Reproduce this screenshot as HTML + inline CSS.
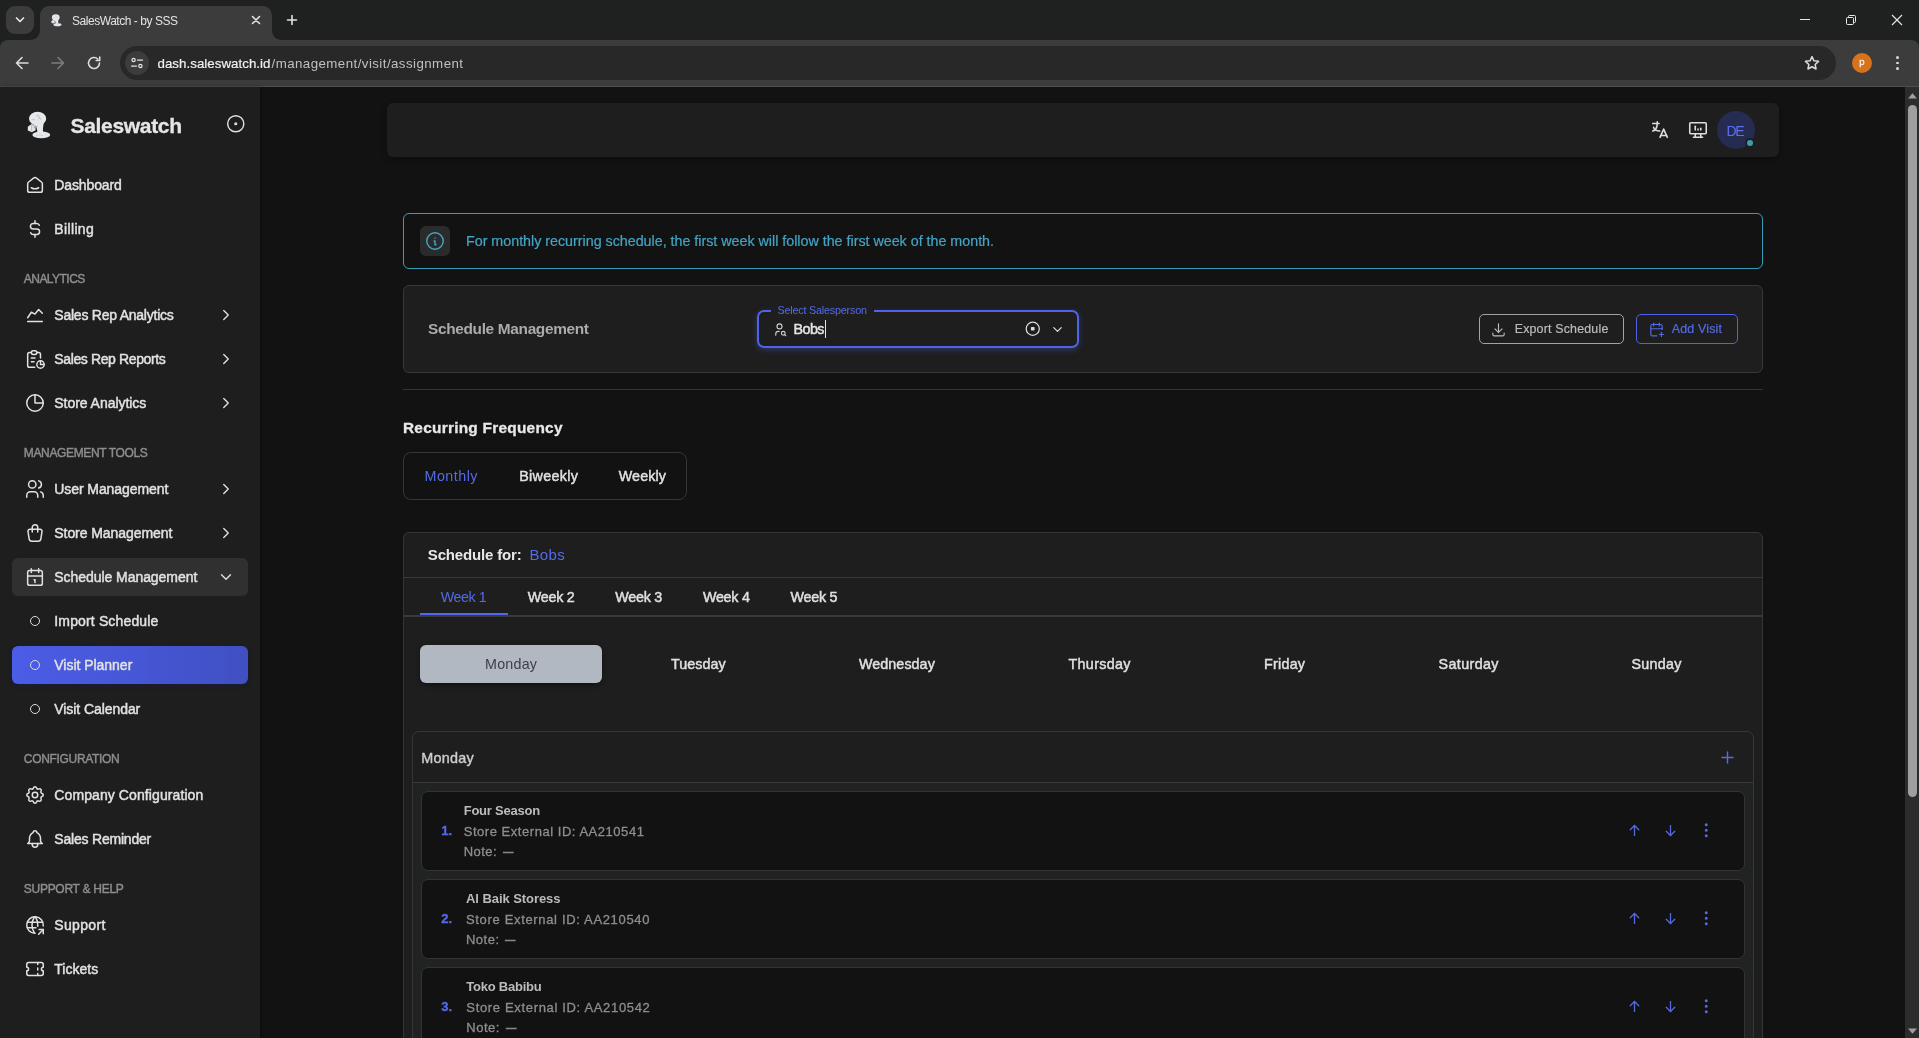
<!DOCTYPE html>
<html lang="en"><head><meta charset="utf-8"><title>SalesWatch - by SSS</title>
<style>
html,body{margin:0;padding:0;background:#121212}
body{width:1919px;height:1038px;overflow:hidden;position:relative;font-family:"Liberation Sans", sans-serif}
.b,.t,.ic{position:absolute;display:block}
.t{white-space:pre;line-height:1;font-kerning:normal}
.ic{overflow:visible}
#root{position:absolute;left:0;top:0;width:1919px;height:1038px;will-change:transform}
</style></head>
<body>
<div id="root">
<div class="b" style="left:0px;top:0px;width:1919px;height:50px;background:#1f2020"></div>
<div class="b" style="left:6px;top:6px;width:28px;height:28px;background:#3c3c3c;border-radius:9px"></div>
<svg class="ic" style="left:14px;top:15px" width="12" height="10" viewBox="0 0 12 10" fill="none" stroke="#e3e3e3" stroke-width="1.7" stroke-linecap="round" stroke-linejoin="round"><path d="M2.500 3l3.500 3.500l3.500-3.500"/></svg>
<svg class="ic" style="left:30px;top:6px" width="254" height="34" viewBox="0 0 254 34"><path fill="#3c3c3c" d="M0 34 C6 34 10 30 10 24 V10 C10 4 14 0 20 0 H232 C238 0 242 4 242 10 V24 C242 30 246 34 252 34 Z"/></svg>
<svg class="ic" style="left:50.600px;top:13.700px" width="10.800" height="12.600" viewBox="0 0 24 28"><ellipse cx="10.600" cy="7.700" rx="8.600" ry="6.900" fill="#e7e8ea"/><path fill="#e7e8ea" d="M7 12.500 L16.800 11.500 C16.200 15.500 15.500 19 16.300 21.800 L10.200 21.800 C10.600 19.500 9.600 16 7 12.500 Z"/><ellipse cx="14.300" cy="23.900" rx="8.900" ry="3.300" fill="#e7e8ea"/><path fill="#e4e6ea" d="M0.800 15.800 L4.600 13 L8.600 14.600 L8.600 19.200 L4.800 21.300 L0.800 19.600 Z"/><path fill="none" stroke="#9fafd0" stroke-width=".7" d="M4.600 13.500 L4.600 20.500 M4.300 8.700 h3.600 M8.800 5.500 q1.500-2.200 3.300-.4 q.9 1.300 -1.200 3.200 M12.800 6 l.6 2.800"/><path fill="none" stroke="#8a8f99" stroke-width=".8" d="M6 14.300 L8.200 17.500 L10.200 14.800"/><path fill="none" stroke="#b9c4dd" stroke-width=".6" d="M9 24.600 q3-1.400 7 0 M18 23.300 l1.500 .9"/></svg>
<span class="t" style="left:72.00px;top:14.84px;font-size:12px;color:#e3e3e3;letter-spacing:-0.459px;">SalesWatch - by SSS</span>
<svg class="ic" style="left:250px;top:14px" width="12" height="12" viewBox="0 0 12 12" stroke="#e3e3e3" stroke-width="1.600" stroke-linecap="round"><path d="M2.500 2.500l7 7M9.500 2.500l-7 7"/></svg>
<svg class="ic" style="left:285px;top:13px" width="14" height="14" viewBox="0 0 14 14" stroke="#e3e3e3" stroke-width="1.600" stroke-linecap="round"><path d="M7 2.500v9M2.500 7h9"/></svg>
<svg class="ic" style="left:1799px;top:14px" width="12" height="12" viewBox="0 0 12 12" stroke="#e8e8e8" stroke-width="1"><path d="M1 5.500h10"/></svg>
<svg class="ic" style="left:1845px;top:14px" width="12" height="12" viewBox="0 0 12 12" fill="none" stroke="#e8e8e8" stroke-width="1"><rect x="1.500" y="3.500" width="7" height="7" rx="1"/><path d="M3.500 3.500v-1a1 1 0 0 1 1-1h5a1 1 0 0 1 1 1v5a1 1 0 0 1-1 1h-1"/></svg>
<svg class="ic" style="left:1891px;top:14px" width="12" height="12" viewBox="0 0 12 12" stroke="#e8e8e8" stroke-width="1.100"><path d="M1 1l10 10M11 1l-10 10"/></svg>
<div class="b" style="left:0px;top:40px;width:1919px;height:46px;background:#3c3c3c;border-radius:8px 8px 0 0"></div>
<div class="b" style="left:0px;top:86px;width:1919px;height:1px;background:#4b4f50"></div>
<svg class="ic" style="left:14px;top:55px" width="16" height="16" viewBox="0 0 16 16" fill="none" stroke="#dcdcdc" stroke-width="1.600" stroke-linecap="round" stroke-linejoin="round"><path d="M14 8h-11.500M8 2.500l-5.500 5.500l5.500 5.500"/></svg>
<svg class="ic" style="left:50px;top:55px" width="16" height="16" viewBox="0 0 16 16" fill="none" stroke="#7d7d7d" stroke-width="1.600" stroke-linecap="round" stroke-linejoin="round"><path d="M2 8h11.500M8 2.500l5.500 5.500l-5.500 5.500"/></svg>
<svg class="ic" style="left:86px;top:55px" width="16" height="16" viewBox="0 0 16 16" fill="none" stroke="#dcdcdc" stroke-width="1.600" stroke-linecap="round" stroke-linejoin="round"><path d="M13.500 8a5.500 5.500 0 1 1-1.700-4"/><path d="M13.700 2v3.500h-3.500" /></svg>
<div class="b" style="left:120px;top:46px;width:1716px;height:34px;background:#282828;border-radius:17px"></div>
<div class="b" style="left:125px;top:51px;width:24px;height:24px;background:#3c3c3c;border-radius:12px"></div>
<svg class="ic" style="left:130px;top:56px" width="14" height="14" viewBox="0 0 14 14" fill="none" stroke="#e3e3e3" stroke-width="1.250" stroke-linecap="round"><circle cx="3.600" cy="4" r="1.600"/><path d="M7.500 4h5"/><circle cx="10.400" cy="10" r="1.600"/><path d="M1.500 10h5"/></svg>
<span class="t" style="left:157.50px;top:56.64px;font-size:13.3px;color:#f0f0f0;letter-spacing:0.038px;-webkit-text-stroke:0.2px #f0f0f0;">dash.saleswatch.id</span>
<span class="t" style="left:271.50px;top:56.64px;font-size:13.3px;color:#c0c0c0;letter-spacing:0.441px;">/management/visit/assignment</span>
<svg class="ic" style="left:1803px;top:54px" width="18" height="18" viewBox="0 0 24 24" fill="none" stroke="#dcdcdc" stroke-width="2" stroke-linejoin="round"><path d="M12 3.500l2.600 5.600l6.100.7l-4.500 4.200l1.200 6l-5.400-3l-5.400 3l1.200-6l-4.500-4.200l6.100-.7z"/></svg>
<div class="b" style="left:1852px;top:53px;width:20px;height:20px;background:#d8731b;border-radius:10px"></div>
<span class="t" style="left:1859.20px;top:56.66px;font-size:9.5px;color:#eef0f2;-webkit-text-stroke:0.3px #eef0f2;">p</span>
<div class="b" style="left:1896.2px;top:56.2px;width:2.6px;height:2.6px;background:#dcdcdc;border-radius:2px"></div>
<div class="b" style="left:1896.2px;top:61.7px;width:2.6px;height:2.6px;background:#dcdcdc;border-radius:2px"></div>
<div class="b" style="left:1896.2px;top:67.2px;width:2.6px;height:2.6px;background:#dcdcdc;border-radius:2px"></div>
<div class="b" style="left:0px;top:87px;width:1919px;height:951px;background:#121212"></div>
<div class="b" style="left:1905px;top:87px;width:14px;height:951px;background:#2c2c2c"></div>
<svg class="ic" style="left:1908px;top:92.500px" width="9" height="6" viewBox="0 0 9 6"><path fill="#a0a0a0" d="M4.500 0.300l4.500 5.200h-9z"/></svg>
<svg class="ic" style="left:1908px;top:1027.500px" width="9" height="6" viewBox="0 0 9 6"><path fill="#a0a0a0" d="M4.500 5.700l4.500-5.200h-9z"/></svg>
<div class="b" style="left:1908px;top:105px;width:9px;height:692px;background:#9f9f9f;border-radius:4.500px"></div>
<div class="b" style="left:0px;top:87px;width:260px;height:951px;background:#1e1e1e;box-shadow:1px 0 4px rgba(0,0,0,.3)"></div>
<svg class="ic" style="left:27px;top:111px" width="24" height="28" viewBox="0 0 24 28"><ellipse cx="10.600" cy="7.700" rx="8.600" ry="6.900" fill="#e7e8ea"/><path fill="#e7e8ea" d="M7 12.500 L16.800 11.500 C16.200 15.500 15.500 19 16.300 21.800 L10.200 21.800 C10.600 19.500 9.600 16 7 12.500 Z"/><ellipse cx="14.300" cy="23.900" rx="8.900" ry="3.300" fill="#e7e8ea"/><path fill="#e4e6ea" d="M0.800 15.800 L4.600 13 L8.600 14.600 L8.600 19.200 L4.800 21.300 L0.800 19.600 Z"/><path fill="none" stroke="#9fafd0" stroke-width=".7" d="M4.600 13.500 L4.600 20.500 M4.300 8.700 h3.600 M8.800 5.500 q1.500-2.200 3.300-.4 q.9 1.300 -1.200 3.200 M12.800 6 l.6 2.800"/><path fill="none" stroke="#8a8f99" stroke-width=".8" d="M6 14.300 L8.200 17.500 L10.200 14.800"/><path fill="none" stroke="#b9c4dd" stroke-width=".6" d="M9 24.600 q3-1.400 7 0 M18 23.300 l1.500 .9"/></svg>
<span class="t" style="left:70.50px;top:115.22px;font-size:21px;color:#e6e6e6;font-weight:700;letter-spacing:-0.323px;-webkit-text-stroke:0.3px #e6e6e6;">Saleswatch</span>
<svg class="ic" style="left:225.25px;top:113.25px;color:#e0e0e0" width="21.5" height="21.5" viewBox="0 0 24 24" fill="none" stroke="currentColor" stroke-width="1.6" stroke-linecap="round" stroke-linejoin="round"><circle cx="12" cy="12" r="1"/><circle cx="12" cy="12" r="9"/></svg>
<svg class="ic" style="left:24.00px;top:174.00px;color:#e2e2e2" width="22" height="22" viewBox="0 0 24 24" fill="none" stroke="currentColor" stroke-width="1.62" stroke-linecap="round" stroke-linejoin="round"><path d="M19 8.71l-5.333-4.148a2.666 2.666 0 0 0-3.274 0l-5.334 4.148a2.665 2.665 0 0 0-1.029 2.105v7.2a2 2 0 0 0 2 2h12a2 2 0 0 0 2-2v-7.2c0-.823-.38-1.6-1.03-2.105"/><path d="M16 15c-2.21 1.333-5.792 1.333-8 0"/></svg>
<span class="t" style="left:54.30px;top:178.05px;font-size:14px;color:#e2e2e2;letter-spacing:-0.125px;-webkit-text-stroke:0.45px #e2e2e2;">Dashboard</span>
<svg class="ic" style="left:24.00px;top:218.00px;color:#e2e2e2" width="22" height="22" viewBox="0 0 24 24" fill="none" stroke="currentColor" stroke-width="1.62" stroke-linecap="round" stroke-linejoin="round"><path d="M16.7 8a3 3 0 0 0-2.7-2h-4a3 3 0 0 0 0 6h4a3 3 0 0 1 0 6h-4a3 3 0 0 1-2.7-2"/><path d="M12 3v3m0 12v3"/></svg>
<span class="t" style="left:54.30px;top:222.05px;font-size:14px;color:#e2e2e2;letter-spacing:0.357px;-webkit-text-stroke:0.45px #e2e2e2;">Billing</span>
<span class="t" style="left:23.80px;top:273.04px;font-size:12px;color:#8e8e8e;letter-spacing:-0.537px;-webkit-text-stroke:0.4px #8e8e8e;">ANALYTICS</span>
<svg class="ic" style="left:24.00px;top:304.00px;color:#e2e2e2" width="22" height="22" viewBox="0 0 24 24" fill="none" stroke="currentColor" stroke-width="1.62" stroke-linecap="round" stroke-linejoin="round"><path d="M4 19h16"/><path d="M4 15l4-6l4 2l4-5l4 4"/></svg>
<span class="t" style="left:54.30px;top:308.05px;font-size:14px;color:#e2e2e2;letter-spacing:-0.235px;-webkit-text-stroke:0.45px #e2e2e2;">Sales Rep Analytics</span>
<svg class="ic" style="left:217.00px;top:306.00px;color:#e2e2e2" width="18" height="18" viewBox="0 0 24 24" fill="none" stroke="currentColor" stroke-width="1.8" stroke-linecap="round" stroke-linejoin="round"><path d="M9 6l6 6l-6 6"/></svg>
<svg class="ic" style="left:24.00px;top:348.00px;color:#e2e2e2" width="22" height="22" viewBox="0 0 24 24" fill="none" stroke="currentColor" stroke-width="1.62" stroke-linecap="round" stroke-linejoin="round"><path d="M8 5h-2a2 2 0 0 0-2 2v12a2 2 0 0 0 2 2h5.697"/><path d="M18 14v4h4"/><path d="M18 11v-4a2 2 0 0 0-2-2h-2"/><path d="M8 5a2 2 0 0 1 2-2h2a2 2 0 0 1 2 2a2 2 0 0 1-2 2h-2a2 2 0 0 1-2-2z"/><path d="M14 18a4 4 0 1 0 8 0a4 4 0 1 0-8 0"/><path d="M8 11h4"/><path d="M8 15h3"/></svg>
<span class="t" style="left:54.30px;top:352.05px;font-size:14px;color:#e2e2e2;letter-spacing:-0.376px;-webkit-text-stroke:0.45px #e2e2e2;">Sales Rep Reports</span>
<svg class="ic" style="left:217.00px;top:350.00px;color:#e2e2e2" width="18" height="18" viewBox="0 0 24 24" fill="none" stroke="currentColor" stroke-width="1.8" stroke-linecap="round" stroke-linejoin="round"><path d="M9 6l6 6l-6 6"/></svg>
<svg class="ic" style="left:24.00px;top:392.00px;color:#e2e2e2" width="22" height="22" viewBox="0 0 24 24" fill="none" stroke="currentColor" stroke-width="1.62" stroke-linecap="round" stroke-linejoin="round"><path d="M12 3v9h9"/><path d="M3 12a9 9 0 1 0 18 0a9 9 0 1 0-18 0"/></svg>
<span class="t" style="left:54.30px;top:396.05px;font-size:14px;color:#e2e2e2;letter-spacing:-0.044px;-webkit-text-stroke:0.45px #e2e2e2;">Store Analytics</span>
<svg class="ic" style="left:217.00px;top:394.00px;color:#e2e2e2" width="18" height="18" viewBox="0 0 24 24" fill="none" stroke="currentColor" stroke-width="1.8" stroke-linecap="round" stroke-linejoin="round"><path d="M9 6l6 6l-6 6"/></svg>
<span class="t" style="left:23.80px;top:447.04px;font-size:12px;color:#8e8e8e;letter-spacing:-0.358px;-webkit-text-stroke:0.4px #8e8e8e;">MANAGEMENT TOOLS</span>
<svg class="ic" style="left:24.00px;top:478.00px;color:#e2e2e2" width="22" height="22" viewBox="0 0 24 24" fill="none" stroke="currentColor" stroke-width="1.62" stroke-linecap="round" stroke-linejoin="round"><path d="M5 7a4 4 0 1 0 8 0a4 4 0 1 0-8 0"/><path d="M3 21v-2a4 4 0 0 1 4-4h4a4 4 0 0 1 4 4v2"/><path d="M16 3.13a4 4 0 0 1 0 7.75"/><path d="M21 21v-2a4 4 0 0 0-3-3.85"/></svg>
<span class="t" style="left:54.30px;top:482.05px;font-size:14px;color:#e2e2e2;letter-spacing:-0.084px;-webkit-text-stroke:0.45px #e2e2e2;">User Management</span>
<svg class="ic" style="left:217.00px;top:480.00px;color:#e2e2e2" width="18" height="18" viewBox="0 0 24 24" fill="none" stroke="currentColor" stroke-width="1.8" stroke-linecap="round" stroke-linejoin="round"><path d="M9 6l6 6l-6 6"/></svg>
<svg class="ic" style="left:24.00px;top:522.00px;color:#e2e2e2" width="22" height="22" viewBox="0 0 24 24" fill="none" stroke="currentColor" stroke-width="1.62" stroke-linecap="round" stroke-linejoin="round"><path d="M6.331 8h11.339a2 2 0 0 1 1.977 2.304l-1.255 8.152a3 3 0 0 1-2.966 2.544h-6.852a3 3 0 0 1-2.965-2.544l-1.255-8.152a2 2 0 0 1 1.977-2.304z"/><path d="M9 11v-5a3 3 0 0 1 6 0v5"/></svg>
<span class="t" style="left:54.30px;top:526.05px;font-size:14px;color:#e2e2e2;letter-spacing:-0.072px;-webkit-text-stroke:0.45px #e2e2e2;">Store Management</span>
<svg class="ic" style="left:217.00px;top:524.00px;color:#e2e2e2" width="18" height="18" viewBox="0 0 24 24" fill="none" stroke="currentColor" stroke-width="1.8" stroke-linecap="round" stroke-linejoin="round"><path d="M9 6l6 6l-6 6"/></svg>
<div class="b" style="left:12px;top:558px;width:236px;height:38px;background:#303030;border-radius:6px"></div>
<svg class="ic" style="left:24.00px;top:566.00px;color:#e2e2e2" width="22" height="22" viewBox="0 0 24 24" fill="none" stroke="currentColor" stroke-width="1.62" stroke-linecap="round" stroke-linejoin="round"><path d="M4 7a2 2 0 0 1 2-2h12a2 2 0 0 1 2 2v12a2 2 0 0 1-2 2h-12a2 2 0 0 1-2-2z"/><path d="M16 3v4"/><path d="M8 3v4"/><path d="M4 11h16"/><path d="M11 15h1v3"/></svg>
<span class="t" style="left:54.30px;top:570.05px;font-size:14px;color:#e2e2e2;letter-spacing:-0.056px;-webkit-text-stroke:0.45px #e2e2e2;">Schedule Management</span>
<svg class="ic" style="left:217.00px;top:568.00px;color:#e2e2e2" width="18" height="18" viewBox="0 0 24 24" fill="none" stroke="currentColor" stroke-width="1.8" stroke-linecap="round" stroke-linejoin="round"><path d="M6 9l6 6l6-6"/></svg>
<div class="b" style="left:30px;top:616.1px;width:10px;height:10px;border:1.400px solid #dcdcdc;border-radius:50%;box-sizing:border-box"></div>
<span class="t" style="left:54.30px;top:614.05px;font-size:14px;color:#e2e2e2;letter-spacing:0.146px;-webkit-text-stroke:0.45px #e2e2e2;">Import Schedule</span>
<div class="b" style="left:12px;top:646px;width:236px;height:38px;background:linear-gradient(90deg,#4b5de6 0%,#4656d4 55%,#4050c2 100%);border-radius:6px;box-shadow:0 2px 4px rgba(20,26,80,.45)"></div>
<div class="b" style="left:30px;top:660.1px;width:10px;height:10px;border:1.400px solid #dcdcdc;border-radius:50%;box-sizing:border-box"></div>
<span class="t" style="left:54.30px;top:658.05px;font-size:14px;color:#e2e2e2;letter-spacing:-0.029px;-webkit-text-stroke:0.45px #e2e2e2;">Visit Planner</span>
<div class="b" style="left:30px;top:704.1px;width:10px;height:10px;border:1.400px solid #dcdcdc;border-radius:50%;box-sizing:border-box"></div>
<span class="t" style="left:54.30px;top:702.05px;font-size:14px;color:#e2e2e2;letter-spacing:-0.070px;-webkit-text-stroke:0.45px #e2e2e2;">Visit Calendar</span>
<span class="t" style="left:23.80px;top:753.04px;font-size:12px;color:#8e8e8e;letter-spacing:-0.315px;-webkit-text-stroke:0.4px #8e8e8e;">CONFIGURATION</span>
<svg class="ic" style="left:24.00px;top:784.00px;color:#e2e2e2" width="22" height="22" viewBox="0 0 24 24" fill="none" stroke="currentColor" stroke-width="1.62" stroke-linecap="round" stroke-linejoin="round"><path d="M10.325 4.317c.426-1.756 2.924-1.756 3.35 0a1.724 1.724 0 0 0 2.573 1.066c1.543-.94 3.31.826 2.37 2.37a1.724 1.724 0 0 0 1.065 2.572c1.756.426 1.756 2.924 0 3.35a1.724 1.724 0 0 0-1.066 2.573c.94 1.543-.826 3.31-2.37 2.37a1.724 1.724 0 0 0-2.572 1.065c-.426 1.756-2.924 1.756-3.35 0a1.724 1.724 0 0 0-2.573-1.066c-1.543.94-3.31-.826-2.37-2.37a1.724 1.724 0 0 0-1.065-2.572c-1.756-.426-1.756-2.924 0-3.35a1.724 1.724 0 0 0 1.066-2.573c-.94-1.543.826-3.31 2.37-2.37c1 .608 2.296.07 2.572-1.065z"/><path d="M9 12a3 3 0 1 0 6 0a3 3 0 0 0-6 0"/></svg>
<span class="t" style="left:54.30px;top:788.05px;font-size:14px;color:#e2e2e2;letter-spacing:0.095px;-webkit-text-stroke:0.45px #e2e2e2;">Company Configuration</span>
<svg class="ic" style="left:24.00px;top:828.00px;color:#e2e2e2" width="22" height="22" viewBox="0 0 24 24" fill="none" stroke="currentColor" stroke-width="1.62" stroke-linecap="round" stroke-linejoin="round"><path d="M10 5a2 2 0 1 1 4 0a7 7 0 0 1 4 6v3a4 4 0 0 0 2 3h-16a4 4 0 0 0 2-3v-3a7 7 0 0 1 4-6"/><path d="M9 17v1a3 3 0 0 0 6 0v-1"/></svg>
<span class="t" style="left:54.30px;top:832.05px;font-size:14px;color:#e2e2e2;letter-spacing:-0.201px;-webkit-text-stroke:0.45px #e2e2e2;">Sales Reminder</span>
<span class="t" style="left:23.80px;top:883.04px;font-size:12px;color:#8e8e8e;letter-spacing:-0.276px;-webkit-text-stroke:0.4px #8e8e8e;">SUPPORT &amp; HELP</span>
<svg class="ic" style="left:24.00px;top:914.00px;color:#e2e2e2" width="22" height="22" viewBox="0 0 24 24" fill="none" stroke="currentColor" stroke-width="1.62" stroke-linecap="round" stroke-linejoin="round"><path d="M20.94 13.045a9 9 0 1 0-8.953 7.955"/><path d="M3.6 9h16.8"/><path d="M3.6 15h9.4"/><path d="M11.5 3a17 17 0 0 0 0 18"/><path d="M12.5 3a16.991 16.991 0 0 1 2.529 10.294"/><path d="M16 22l5-5"/><path d="M21 21.5v-4.5h-4.5"/></svg>
<span class="t" style="left:54.30px;top:918.05px;font-size:14px;color:#e2e2e2;letter-spacing:0.326px;-webkit-text-stroke:0.45px #e2e2e2;">Support</span>
<svg class="ic" style="left:24.00px;top:958.00px;color:#e2e2e2" width="22" height="22" viewBox="0 0 24 24" fill="none" stroke="currentColor" stroke-width="1.62" stroke-linecap="round" stroke-linejoin="round"><path d="M15 5v2"/><path d="M15 11v2"/><path d="M15 17v2"/><path d="M5 5h14a2 2 0 0 1 2 2v3a2 2 0 0 0 0 4v3a2 2 0 0 1-2 2h-14a2 2 0 0 1-2-2v-3a2 2 0 0 0 0-4v-3a2 2 0 0 1 2-2"/></svg>
<span class="t" style="left:54.30px;top:962.05px;font-size:14px;color:#e2e2e2;letter-spacing:0.029px;-webkit-text-stroke:0.45px #e2e2e2;">Tickets</span>
<div class="b" style="left:387px;top:103px;width:1392px;height:54px;background:#1e1e1e;border-radius:6px;box-shadow:0 2px 6px rgba(0,0,0,.3)"></div>
<svg class="ic" style="left:1649.00px;top:119.00px;color:#dedede" width="22" height="22" viewBox="0 0 24 24" fill="none" stroke="currentColor" stroke-width="1.7" stroke-linecap="round" stroke-linejoin="round"><path d="M4 5h7"/><path d="M9 3v2c0 4.418-2.239 8-5 8"/><path d="M5 9c0 2.144 2.952 3.908 6.7 4"/><path d="M12 20l4-9l4 9"/><path d="M19.1 18h-6.2"/></svg>
<svg class="ic" style="left:1687.00px;top:119.00px;color:#dedede" width="22" height="22" viewBox="0 0 24 24" fill="none" stroke="currentColor" stroke-width="1.7" stroke-linecap="round" stroke-linejoin="round"><path d="M3 5a1 1 0 0 1 1-1h16a1 1 0 0 1 1 1v10a1 1 0 0 1-1 1h-16a1 1 0 0 1-1-1z"/><path d="M7 20h10"/><path d="M9 16v4"/><path d="M15 16v4"/><path d="M9 12v-4"/><path d="M12 12v-1"/><path d="M15 12v-2"/></svg>
<div class="b" style="left:1717px;top:111px;width:38px;height:38px;background:#262b52;border-radius:50%"></div>
<span class="t" style="left:1726.50px;top:123.65px;font-size:14px;color:#5b6ff0;letter-spacing:-1.453px;">DE</span>
<div class="b" style="left:1746.8px;top:139.8px;width:6.4px;height:6.4px;background:#3b9db2;border-radius:50%;box-shadow:0 0 0 2px #1e1e1e"></div>
<div class="b" style="left:403px;top:213px;width:1360px;height:56px;border:1px solid #389cba;border-radius:6px;box-sizing:border-box"></div>
<div class="b" style="left:420px;top:226px;width:30px;height:30px;background:#2b2b2b;border-radius:6px"></div>
<svg class="ic" style="left:424.00px;top:230.00px;color:#42a5c5" width="22" height="22" viewBox="0 0 24 24" fill="none" stroke="currentColor" stroke-width="1.55" stroke-linecap="round" stroke-linejoin="round"><path d="M3 12a9 9 0 1 0 18 0a9 9 0 0 0-18 0"/><path d="M12 9h.01"/><path d="M11 12h1v4h1"/></svg>
<span class="t" style="left:466.00px;top:233.89px;font-size:14.3px;color:#42a5c5;letter-spacing:-0.014px;-webkit-text-stroke:0.2px #42a5c5;">For monthly recurring schedule, the first week will follow the first week of the month.</span>
<div class="b" style="left:403px;top:285px;width:1360px;height:88px;background:#1e1e1e;border:1px solid #383838;border-radius:6px;box-sizing:border-box"></div>
<span class="t" style="left:428.00px;top:321.26px;font-size:15.4px;color:#ababab;font-weight:700;letter-spacing:-0.321px;">Schedule Management</span>
<div class="b" style="left:757px;top:310px;width:322px;height:38px;border:2px solid #4f63e6;border-radius:7px;box-sizing:border-box;box-shadow:0 2px 6px rgba(79,99,230,.35)"></div>
<div class="b" style="left:771px;top:308px;width:103px;height:6px;background:#1e1e1e"></div>
<span class="t" style="left:777.50px;top:304.86px;font-size:10.8px;color:#546be8;letter-spacing:-0.208px;">Select Salesperson</span>
<svg class="ic" style="left:771.70px;top:321.50px;color:#cfcfcf" width="15" height="15" viewBox="0 0 24 24" fill="none" stroke="currentColor" stroke-width="1.8" stroke-linecap="round" stroke-linejoin="round"><path d="M8 7a4 4 0 1 0 8 0a4 4 0 0 0-8 0"/><path d="M6 21v-2a4 4 0 0 1 4-4h1.5"/><path d="M15 18a3 3 0 1 0 6 0a3 3 0 1 0-6 0"/><path d="M20.2 20.2l1.800 1.800"/></svg>
<span class="t" style="left:793.50px;top:321.89px;font-size:14.3px;color:#e4e4e4;letter-spacing:-0.531px;-webkit-text-stroke:0.45px #e4e4e4;">Bobs</span>
<div class="b" style="left:825.3px;top:319.5px;width:1px;height:18px;background:#e4e4e4"></div>
<svg class="ic" style="left:1024.25px;top:320.25px;color:#dedede" width="17.5" height="17.5" viewBox="0 0 24 24" fill="none" stroke="currentColor" stroke-width="1.7" stroke-linecap="round" stroke-linejoin="round"><circle cx="12" cy="12" r="9"/><rect x="9.500" y="9.500" width="5" height="5" rx="1" fill="currentColor" stroke="none"/></svg>
<svg class="ic" style="left:1049.50px;top:322.00px;color:#dedede" width="15" height="15" viewBox="0 0 24 24" fill="none" stroke="currentColor" stroke-width="2" stroke-linecap="round" stroke-linejoin="round"><path d="M6 9l6 6l6-6"/></svg>
<div class="b" style="left:1479px;top:314px;width:145px;height:30px;border:1px solid #a3a3a3;border-radius:5px;box-sizing:border-box"></div>
<svg class="ic" style="left:1489.90px;top:320.70px;color:#bcbcbc" width="17" height="17" viewBox="0 0 24 24" fill="none" stroke="currentColor" stroke-width="1.6" stroke-linecap="round" stroke-linejoin="round"><path d="M4 17v2a2 2 0 0 0 2 2h12a2 2 0 0 0 2-2v-2"/><path d="M7 11l5 5l5-5"/><path d="M12 4v12"/></svg>
<span class="t" style="left:1514.70px;top:322.70px;font-size:12.4px;color:#bcbcbc;letter-spacing:0.191px;-webkit-text-stroke:0.2px #bcbcbc;">Export Schedule</span>
<div class="b" style="left:1636px;top:314px;width:102px;height:30px;border:1px solid #4f63e6;border-radius:5px;box-sizing:border-box"></div>
<svg class="ic" style="left:1647.90px;top:320.50px;color:#546be8" width="17" height="17" viewBox="0 0 24 24" fill="none" stroke="currentColor" stroke-width="1.6" stroke-linecap="round" stroke-linejoin="round"><path d="M12.500 21h-6.500a2 2 0 0 1-2-2v-12a2 2 0 0 1 2-2h12a2 2 0 0 1 2 2v5"/><path d="M16 3v4"/><path d="M8 3v4"/><path d="M4 11h16"/><path d="M16 19h6"/><path d="M19 16v6"/></svg>
<span class="t" style="left:1671.70px;top:322.70px;font-size:12.4px;color:#546be8;letter-spacing:0.202px;-webkit-text-stroke:0.2px #546be8;">Add Visit</span>
<div class="b" style="left:403px;top:389px;width:1360px;height:1px;background:#333"></div>
<span class="t" style="left:403.00px;top:419.56px;font-size:15.4px;color:#e8e8e8;font-weight:700;letter-spacing:0.260px;-webkit-text-stroke:0.3px #e8e8e8;">Recurring Frequency</span>
<div class="b" style="left:403px;top:452px;width:284px;height:48px;border:1px solid #363636;border-radius:8px;box-sizing:border-box"></div>
<span class="t" style="left:424.50px;top:468.69px;font-size:14.3px;color:#546be8;letter-spacing:0.490px;">Monthly</span>
<span class="t" style="left:519.20px;top:468.69px;font-size:14.3px;color:#e0e0e0;letter-spacing:0.311px;-webkit-text-stroke:0.45px #e0e0e0;">Biweekly</span>
<span class="t" style="left:618.80px;top:468.69px;font-size:14.3px;color:#e0e0e0;letter-spacing:0.075px;-webkit-text-stroke:0.45px #e0e0e0;">Weekly</span>
<div class="b" style="left:403px;top:532px;width:1360px;height:520px;background:#1e1e1e;border:1px solid #363636;border-radius:6px;box-sizing:border-box"></div>
<span class="t" style="left:427.80px;top:547.30px;font-size:15px;color:#e8e8e8;font-weight:700;letter-spacing:-0.155px;">Schedule for:</span>
<span class="t" style="left:529.50px;top:547.30px;font-size:15px;color:#546be8;letter-spacing:0.332px;">Bobs</span>
<div class="b" style="left:404px;top:577px;width:1358px;height:1px;background:#3a3a3a"></div>
<span class="t" style="left:440.80px;top:589.59px;font-size:14.3px;color:#546be8;letter-spacing:-0.464px;">Week 1</span>
<span class="t" style="left:527.80px;top:589.59px;font-size:14.3px;color:#e0e0e0;letter-spacing:-0.244px;-webkit-text-stroke:0.45px #e0e0e0;">Week 2</span>
<span class="t" style="left:615.30px;top:589.59px;font-size:14.3px;color:#e0e0e0;letter-spacing:-0.244px;-webkit-text-stroke:0.45px #e0e0e0;">Week 3</span>
<span class="t" style="left:702.90px;top:589.59px;font-size:14.3px;color:#e0e0e0;letter-spacing:-0.244px;-webkit-text-stroke:0.45px #e0e0e0;">Week 4</span>
<span class="t" style="left:790.50px;top:589.59px;font-size:14.3px;color:#e0e0e0;letter-spacing:-0.244px;-webkit-text-stroke:0.45px #e0e0e0;">Week 5</span>
<div class="b" style="left:404px;top:615px;width:1358px;height:2px;background:#3a3a3a"></div>
<div class="b" style="left:420px;top:613px;width:88px;height:2px;background:#5265f0"></div>
<div class="b" style="left:420px;top:645px;width:182px;height:38px;background:#b1b8c1;border-radius:6px;box-shadow:0 2px 5px rgba(0,0,0,.45)"></div>
<span class="t" style="left:485.00px;top:656.89px;font-size:14.3px;color:#3e4045;letter-spacing:0.225px;">Monday</span>
<span class="t" style="left:671.00px;top:656.89px;font-size:14.3px;color:#e0e0e0;letter-spacing:0.048px;-webkit-text-stroke:0.45px #e0e0e0;">Tuesday</span>
<span class="t" style="left:859.00px;top:656.89px;font-size:14.3px;color:#e0e0e0;letter-spacing:0.069px;-webkit-text-stroke:0.45px #e0e0e0;">Wednesday</span>
<span class="t" style="left:1068.50px;top:656.89px;font-size:14.3px;color:#e0e0e0;letter-spacing:0.342px;-webkit-text-stroke:0.45px #e0e0e0;">Thursday</span>
<span class="t" style="left:1264.00px;top:656.89px;font-size:14.3px;color:#e0e0e0;letter-spacing:0.253px;-webkit-text-stroke:0.45px #e0e0e0;">Friday</span>
<span class="t" style="left:1438.50px;top:656.89px;font-size:14.3px;color:#e0e0e0;letter-spacing:0.395px;-webkit-text-stroke:0.45px #e0e0e0;">Saturday</span>
<span class="t" style="left:1631.50px;top:656.89px;font-size:14.3px;color:#e0e0e0;letter-spacing:0.300px;-webkit-text-stroke:0.45px #e0e0e0;">Sunday</span>
<div class="b" style="left:412px;top:731px;width:1342px;height:330px;border:1px solid #363636;border-radius:7px;box-sizing:border-box"></div>
<span class="t" style="left:421.30px;top:750.51px;font-size:14.4px;color:#cdcdcd;letter-spacing:0.259px;-webkit-text-stroke:0.4px #cdcdcd;">Monday</span>
<svg class="ic" style="left:1718.00px;top:747.50px;color:#546be8" width="19" height="19" viewBox="0 0 24 24" fill="none" stroke="currentColor" stroke-width="1.8" stroke-linecap="round" stroke-linejoin="round"><path d="M12 5v14"/><path d="M5 12h14"/></svg>
<div class="b" style="left:413px;top:783px;width:1340px;height:270px;background:#212322"></div>
<div class="b" style="left:413px;top:782px;width:1340px;height:1px;background:#3a3a3a"></div>
<div class="b" style="left:421px;top:791px;width:1324px;height:80px;background:#121212;border:1px solid #333;border-radius:7px;box-sizing:border-box"></div>
<span class="t" style="left:441.20px;top:823.99px;font-size:13px;color:#546be8;font-weight:700;-webkit-text-stroke:0.3px #546be8;">1.</span>
<span class="t" style="left:463.70px;top:803.99px;font-size:13px;color:#bcbcbc;font-weight:700;letter-spacing:-0.225px;">Four Season</span>
<span class="t" style="left:463.70px;top:824.79px;font-size:13px;color:#8e8e8e;letter-spacing:0.538px;-webkit-text-stroke:0.3px #8e8e8e;">Store External ID: AA210541</span>
<span class="t" style="left:463.70px;top:844.89px;font-size:13px;color:#8e8e8e;letter-spacing:0.480px;-webkit-text-stroke:0.3px #8e8e8e;">Note:</span>
<span class="t" style="left:503.00px;top:844.89px;font-size:13px;color:#8e8e8e;-webkit-text-stroke:0.4px #8e8e8e;transform:scaleX(.8);transform-origin:0 0;">—</span>
<svg class="ic" style="left:1626.10px;top:822.10px;color:#546be8" width="17" height="17" viewBox="0 0 24 24" fill="none" stroke="currentColor" stroke-width="1.8" stroke-linecap="round" stroke-linejoin="round"><path d="M12 5v14"/><path d="M18 11l-6-6"/><path d="M6 11l6-6"/></svg>
<svg class="ic" style="left:1662.10px;top:822.10px;color:#546be8" width="17" height="17" viewBox="0 0 24 24" fill="none" stroke="currentColor" stroke-width="1.8" stroke-linecap="round" stroke-linejoin="round"><path d="M12 5v14"/><path d="M18 13l-6 6"/><path d="M6 13l6 6"/></svg>
<svg class="ic" style="left:1697.35px;top:821.45px;color:#546be8" width="18.5" height="18.5" viewBox="0 0 24 24" fill="none" stroke="currentColor" stroke-width="1.9" stroke-linecap="round" stroke-linejoin="round"><circle cx="12" cy="5" r="1"/><circle cx="12" cy="12" r="1"/><circle cx="12" cy="19" r="1"/></svg>
<div class="b" style="left:421px;top:879px;width:1324px;height:80px;background:#121212;border:1px solid #333;border-radius:7px;box-sizing:border-box"></div>
<span class="t" style="left:441.20px;top:911.99px;font-size:13px;color:#546be8;font-weight:700;-webkit-text-stroke:0.3px #546be8;">2.</span>
<span class="t" style="left:466.00px;top:891.99px;font-size:13px;color:#bcbcbc;font-weight:700;letter-spacing:-0.062px;">Al Baik Storess</span>
<span class="t" style="left:466.00px;top:912.79px;font-size:13px;color:#8e8e8e;letter-spacing:0.661px;-webkit-text-stroke:0.3px #8e8e8e;">Store External ID: AA210540</span>
<span class="t" style="left:466.00px;top:932.89px;font-size:13px;color:#8e8e8e;letter-spacing:0.480px;-webkit-text-stroke:0.3px #8e8e8e;">Note:</span>
<span class="t" style="left:505.30px;top:932.89px;font-size:13px;color:#8e8e8e;-webkit-text-stroke:0.4px #8e8e8e;transform:scaleX(.8);transform-origin:0 0;">—</span>
<svg class="ic" style="left:1626.10px;top:910.10px;color:#546be8" width="17" height="17" viewBox="0 0 24 24" fill="none" stroke="currentColor" stroke-width="1.8" stroke-linecap="round" stroke-linejoin="round"><path d="M12 5v14"/><path d="M18 11l-6-6"/><path d="M6 11l6-6"/></svg>
<svg class="ic" style="left:1662.10px;top:910.10px;color:#546be8" width="17" height="17" viewBox="0 0 24 24" fill="none" stroke="currentColor" stroke-width="1.8" stroke-linecap="round" stroke-linejoin="round"><path d="M12 5v14"/><path d="M18 13l-6 6"/><path d="M6 13l6 6"/></svg>
<svg class="ic" style="left:1697.35px;top:909.45px;color:#546be8" width="18.5" height="18.5" viewBox="0 0 24 24" fill="none" stroke="currentColor" stroke-width="1.9" stroke-linecap="round" stroke-linejoin="round"><circle cx="12" cy="5" r="1"/><circle cx="12" cy="12" r="1"/><circle cx="12" cy="19" r="1"/></svg>
<div class="b" style="left:421px;top:967px;width:1324px;height:80px;background:#121212;border:1px solid #333;border-radius:7px;box-sizing:border-box"></div>
<span class="t" style="left:441.20px;top:999.99px;font-size:13px;color:#546be8;font-weight:700;-webkit-text-stroke:0.3px #546be8;">3.</span>
<span class="t" style="left:466.30px;top:979.99px;font-size:13px;color:#bcbcbc;font-weight:700;letter-spacing:-0.237px;">Toko Babibu</span>
<span class="t" style="left:466.30px;top:1000.79px;font-size:13px;color:#8e8e8e;letter-spacing:0.665px;-webkit-text-stroke:0.3px #8e8e8e;">Store External ID: AA210542</span>
<span class="t" style="left:466.30px;top:1020.89px;font-size:13px;color:#8e8e8e;letter-spacing:0.480px;-webkit-text-stroke:0.3px #8e8e8e;">Note:</span>
<span class="t" style="left:505.60px;top:1020.89px;font-size:13px;color:#8e8e8e;-webkit-text-stroke:0.4px #8e8e8e;transform:scaleX(.8);transform-origin:0 0;">—</span>
<svg class="ic" style="left:1626.10px;top:998.10px;color:#546be8" width="17" height="17" viewBox="0 0 24 24" fill="none" stroke="currentColor" stroke-width="1.8" stroke-linecap="round" stroke-linejoin="round"><path d="M12 5v14"/><path d="M18 11l-6-6"/><path d="M6 11l6-6"/></svg>
<svg class="ic" style="left:1662.10px;top:998.10px;color:#546be8" width="17" height="17" viewBox="0 0 24 24" fill="none" stroke="currentColor" stroke-width="1.8" stroke-linecap="round" stroke-linejoin="round"><path d="M12 5v14"/><path d="M18 13l-6 6"/><path d="M6 13l6 6"/></svg>
<svg class="ic" style="left:1697.35px;top:997.45px;color:#546be8" width="18.5" height="18.5" viewBox="0 0 24 24" fill="none" stroke="currentColor" stroke-width="1.9" stroke-linecap="round" stroke-linejoin="round"><circle cx="12" cy="5" r="1"/><circle cx="12" cy="12" r="1"/><circle cx="12" cy="19" r="1"/></svg>
</div>
</body></html>
